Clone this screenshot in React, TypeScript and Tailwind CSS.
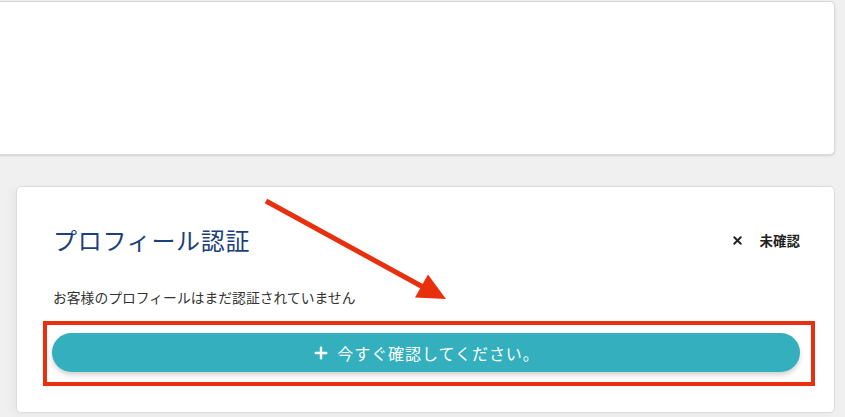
import { Plus, X } from "lucide-react";

export default function App() {
  return (
    <div
      className="min-h-[417px] w-full bg-[#f0f0f0] pt-px pr-[10px] text-[#333]"
      style={{ fontFamily: '"Noto Sans CJK JP", "Noto Sans", sans-serif' }}
    >
      {/* top panel, cut off on the left */}
      <div className="-ml-3 h-[154px] rounded-[5px] border border-[#d9d9d9] bg-white shadow-sm" />

      <div className="ml-4 mt-[31px]">
        <div className="relative rounded-[5px] border border-[#dcdcdc] bg-white pl-[35px] pr-[34px] pt-[37px] pb-[40px] shadow-[-4px_2px_10px_rgba(0,0,0,0.04)]">
          <div className="flex h-8 items-center justify-between">
            <h2 className="pl-px text-[24px] font-normal leading-8 tracking-[0.03em] text-[#1c3f7d]">
              プロフィール認証
            </h2>
            <div className="flex items-center gap-[16px] text-[13.5px] font-bold text-[#222]">
              <X size={13} strokeWidth={3.5} />
              <span>未確認</span>
            </div>
          </div>

          <p className="mt-[31px] pl-px text-[13.8px] leading-5 text-[#333]">
            お客様のプロフィールはまだ認証されていません
          </p>

          <div className="relative mt-[26px]">
            <button className="flex h-[39px] w-full items-center justify-center gap-[7px] rounded-full bg-[#34afbe] text-[16px] tracking-[0.06em] text-white shadow-[0_3px_5px_rgba(0,0,0,0.18)]">
              <Plus size={18} strokeWidth={3.2} />
              <span>今すぐ確認してください。</span>
            </button>
            {/* annotation box */}
            <div className="pointer-events-none absolute -left-[9px] -right-[15px] -top-[12px] -bottom-[14px] border-[4px] border-[#e8300f]" />
          </div>

          {/* annotation arrow */}
          <svg
            className="pointer-events-none absolute left-0 top-0 overflow-visible"
            width="460"
            height="130"
            viewBox="0 0 460 130"
          >
            <line x1="249" y1="14" x2="406" y2="100" stroke="#e8300f" strokeWidth="5" />
            <polygon points="429,112 398,110.5 411,87.5" fill="#e8300f" />
          </svg>
        </div>
      </div>
    </div>
  );
}
